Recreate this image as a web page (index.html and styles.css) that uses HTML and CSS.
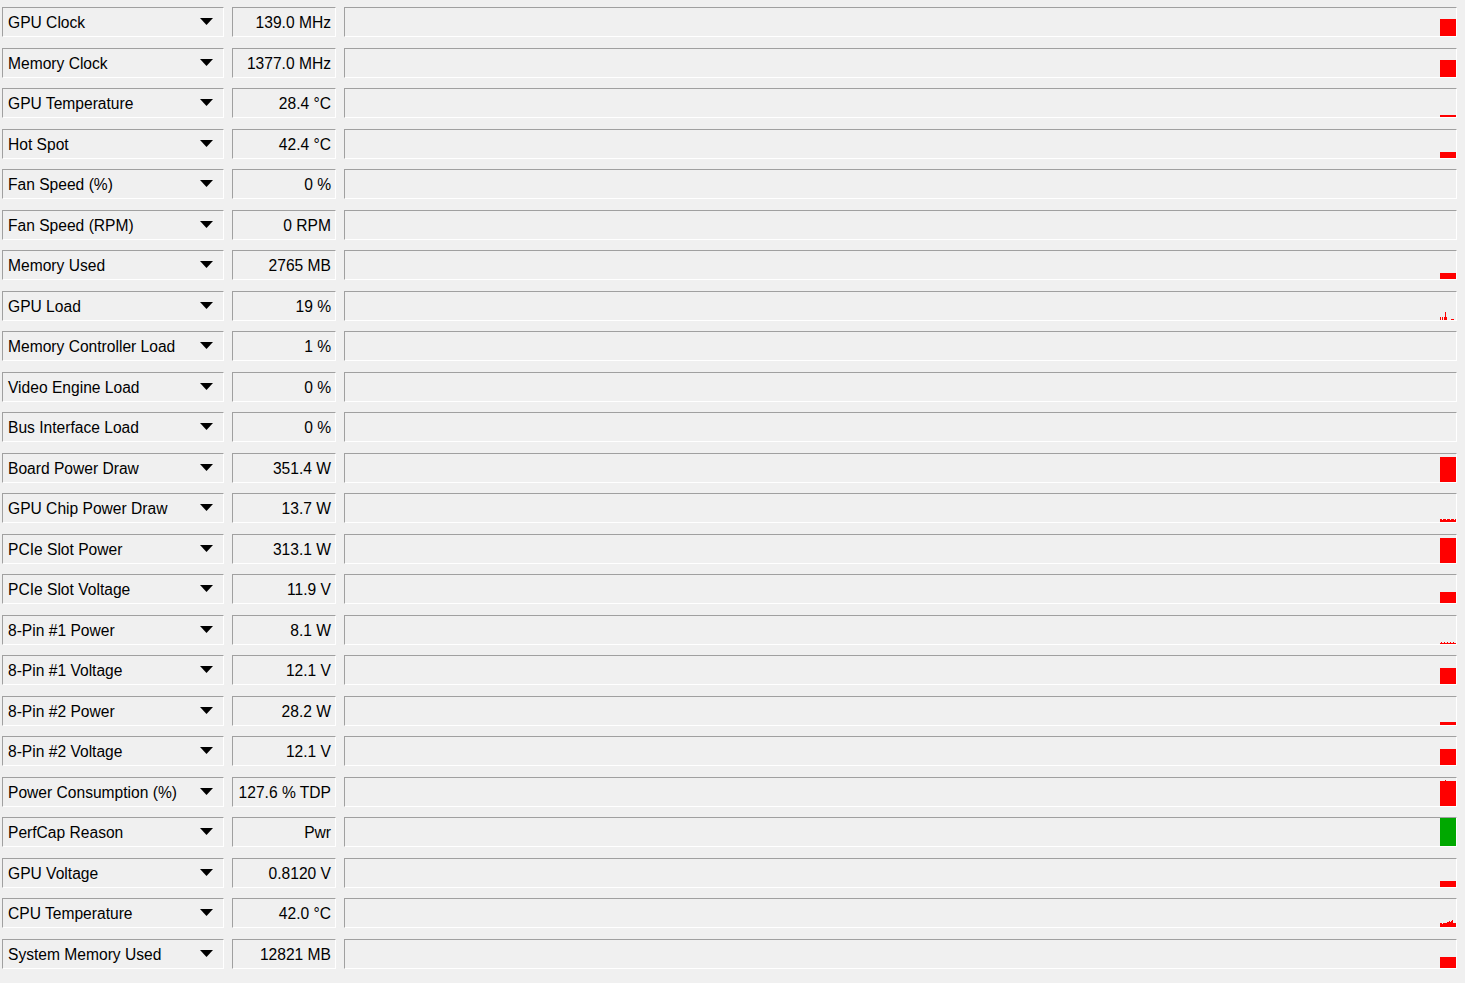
FILE: index.html
```html
<!DOCTYPE html>
<html>
<head>
<meta charset="utf-8">
<title>Sensors</title>
<link rel="stylesheet" href="styles.css">
</head>
<body>
<div class="sensors">
  <div class="row">
    <div class="box name"><span class="label">GPU Clock</span><svg class="arrow" viewBox="0 0 13 7"><polygon points="0,0 13,0 6.5,7"/></svg></div>
    <div class="box value">139.0 MHz</div>
    <div class="box graph"><i class="bar" style="height:17px"></i></div>
  </div>
  <div class="row">
    <div class="box name"><span class="label">Memory Clock</span><svg class="arrow" viewBox="0 0 13 7"><polygon points="0,0 13,0 6.5,7"/></svg></div>
    <div class="box value">1377.0 MHz</div>
    <div class="box graph"><i class="bar" style="height:17px"></i></div>
  </div>
  <div class="row">
    <div class="box name"><span class="label">GPU Temperature</span><svg class="arrow" viewBox="0 0 13 7"><polygon points="0,0 13,0 6.5,7"/></svg></div>
    <div class="box value">28.4 °C</div>
    <div class="box graph"><i class="bar" style="height:2px"></i></div>
  </div>
  <div class="row">
    <div class="box name"><span class="label">Hot Spot</span><svg class="arrow" viewBox="0 0 13 7"><polygon points="0,0 13,0 6.5,7"/></svg></div>
    <div class="box value">42.4 °C</div>
    <div class="box graph"><i class="bar" style="height:6px"></i></div>
  </div>
  <div class="row">
    <div class="box name"><span class="label">Fan Speed (%)</span><svg class="arrow" viewBox="0 0 13 7"><polygon points="0,0 13,0 6.5,7"/></svg></div>
    <div class="box value">0 %</div>
    <div class="box graph"></div>
  </div>
  <div class="row">
    <div class="box name"><span class="label">Fan Speed (RPM)</span><svg class="arrow" viewBox="0 0 13 7"><polygon points="0,0 13,0 6.5,7"/></svg></div>
    <div class="box value">0 RPM</div>
    <div class="box graph"></div>
  </div>
  <div class="row">
    <div class="box name"><span class="label">Memory Used</span><svg class="arrow" viewBox="0 0 13 7"><polygon points="0,0 13,0 6.5,7"/></svg></div>
    <div class="box value">2765 MB</div>
    <div class="box graph"><i class="bar" style="height:6px"></i></div>
  </div>
  <div class="row">
    <div class="box name"><span class="label">GPU Load</span><svg class="arrow" viewBox="0 0 13 7"><polygon points="0,0 13,0 6.5,7"/></svg></div>
    <div class="box value">19 %</div>
    <div class="box graph"><div class="spikes"><i style="height:3px"></i><i style="height:0"></i><i style="height:3px"></i><i style="height:0"></i><i style="height:3px"></i><i style="height:8px"></i><i style="height:3px"></i><i style="height:0"></i><i style="height:0"></i><i style="height:0"></i><i style="height:0"></i><i style="height:1px"></i><i style="height:1px"></i><i style="height:1px"></i><i style="height:0"></i><i style="height:0"></i></div></div>
  </div>
  <div class="row">
    <div class="box name"><span class="label">Memory Controller Load</span><svg class="arrow" viewBox="0 0 13 7"><polygon points="0,0 13,0 6.5,7"/></svg></div>
    <div class="box value">1 %</div>
    <div class="box graph"></div>
  </div>
  <div class="row">
    <div class="box name"><span class="label">Video Engine Load</span><svg class="arrow" viewBox="0 0 13 7"><polygon points="0,0 13,0 6.5,7"/></svg></div>
    <div class="box value">0 %</div>
    <div class="box graph"></div>
  </div>
  <div class="row">
    <div class="box name"><span class="label">Bus Interface Load</span><svg class="arrow" viewBox="0 0 13 7"><polygon points="0,0 13,0 6.5,7"/></svg></div>
    <div class="box value">0 %</div>
    <div class="box graph"></div>
  </div>
  <div class="row">
    <div class="box name"><span class="label">Board Power Draw</span><svg class="arrow" viewBox="0 0 13 7"><polygon points="0,0 13,0 6.5,7"/></svg></div>
    <div class="box value">351.4 W</div>
    <div class="box graph"><i class="bar" style="height:25px"></i></div>
  </div>
  <div class="row">
    <div class="box name"><span class="label">GPU Chip Power Draw</span><svg class="arrow" viewBox="0 0 13 7"><polygon points="0,0 13,0 6.5,7"/></svg></div>
    <div class="box value">13.7 W</div>
    <div class="box graph"><div class="spikes"><i style="height:3px"></i><i style="height:3px"></i><i style="height:2px"></i><i style="height:3px"></i><i style="height:3px"></i><i style="height:3px"></i><i style="height:2px"></i><i style="height:3px"></i><i style="height:3px"></i><i style="height:3px"></i><i style="height:2px"></i><i style="height:3px"></i><i style="height:3px"></i><i style="height:3px"></i><i style="height:2px"></i><i style="height:3px"></i></div></div>
  </div>
  <div class="row">
    <div class="box name"><span class="label">PCIe Slot Power</span><svg class="arrow" viewBox="0 0 13 7"><polygon points="0,0 13,0 6.5,7"/></svg></div>
    <div class="box value">313.1 W</div>
    <div class="box graph"><i class="bar" style="height:25px"></i></div>
  </div>
  <div class="row">
    <div class="box name"><span class="label">PCIe Slot Voltage</span><svg class="arrow" viewBox="0 0 13 7"><polygon points="0,0 13,0 6.5,7"/></svg></div>
    <div class="box value">11.9 V</div>
    <div class="box graph"><i class="bar" style="height:11px"></i></div>
  </div>
  <div class="row">
    <div class="box name"><span class="label">8-Pin #1 Power</span><svg class="arrow" viewBox="0 0 13 7"><polygon points="0,0 13,0 6.5,7"/></svg></div>
    <div class="box value">8.1 W</div>
    <div class="box graph"><div class="spikes"><i style="height:1px"></i><i style="height:2px"></i><i style="height:1px"></i><i style="height:1px"></i><i style="height:2px"></i><i style="height:1px"></i><i style="height:1px"></i><i style="height:2px"></i><i style="height:1px"></i><i style="height:1px"></i><i style="height:2px"></i><i style="height:1px"></i><i style="height:1px"></i><i style="height:2px"></i><i style="height:1px"></i><i style="height:1px"></i></div></div>
  </div>
  <div class="row">
    <div class="box name"><span class="label">8-Pin #1 Voltage</span><svg class="arrow" viewBox="0 0 13 7"><polygon points="0,0 13,0 6.5,7"/></svg></div>
    <div class="box value">12.1 V</div>
    <div class="box graph"><i class="bar" style="height:16px"></i></div>
  </div>
  <div class="row">
    <div class="box name"><span class="label">8-Pin #2 Power</span><svg class="arrow" viewBox="0 0 13 7"><polygon points="0,0 13,0 6.5,7"/></svg></div>
    <div class="box value">28.2 W</div>
    <div class="box graph"><i class="bar" style="height:3px"></i></div>
  </div>
  <div class="row">
    <div class="box name"><span class="label">8-Pin #2 Voltage</span><svg class="arrow" viewBox="0 0 13 7"><polygon points="0,0 13,0 6.5,7"/></svg></div>
    <div class="box value">12.1 V</div>
    <div class="box graph"><i class="bar" style="height:16px"></i></div>
  </div>
  <div class="row">
    <div class="box name"><span class="label">Power Consumption (%)</span><svg class="arrow" viewBox="0 0 13 7"><polygon points="0,0 13,0 6.5,7"/></svg></div>
    <div class="box value">127.6 % TDP</div>
    <div class="box graph"><div class="spikes"><i style="height:25px"></i><i style="height:25px"></i><i style="height:25px"></i><i style="height:25px"></i><i style="height:25px"></i><i style="height:26px"></i><i style="height:25px"></i><i style="height:25px"></i><i style="height:25px"></i><i style="height:25px"></i><i style="height:25px"></i><i style="height:25px"></i><i style="height:25px"></i><i style="height:25px"></i><i style="height:25px"></i><i style="height:25px"></i></div></div>
  </div>
  <div class="row">
    <div class="box name"><span class="label">PerfCap Reason</span><svg class="arrow" viewBox="0 0 13 7"><polygon points="0,0 13,0 6.5,7"/></svg></div>
    <div class="box value">Pwr</div>
    <div class="box graph"><i class="bar green" style="height:28px"></i></div>
  </div>
  <div class="row">
    <div class="box name"><span class="label">GPU Voltage</span><svg class="arrow" viewBox="0 0 13 7"><polygon points="0,0 13,0 6.5,7"/></svg></div>
    <div class="box value">0.8120 V</div>
    <div class="box graph"><i class="bar" style="height:6px"></i></div>
  </div>
  <div class="row">
    <div class="box name"><span class="label">CPU Temperature</span><svg class="arrow" viewBox="0 0 13 7"><polygon points="0,0 13,0 6.5,7"/></svg></div>
    <div class="box value">42.0 °C</div>
    <div class="box graph"><div class="spikes"><i style="height:4px"></i><i style="height:4px"></i><i style="height:3px"></i><i style="height:4px"></i><i style="height:4px"></i><i style="height:4px"></i><i style="height:4px"></i><i style="height:5px"></i><i style="height:5px"></i><i style="height:6px"></i><i style="height:5px"></i><i style="height:6px"></i><i style="height:7px"></i><i style="height:4px"></i><i style="height:4px"></i><i style="height:4px"></i></div></div>
  </div>
  <div class="row">
    <div class="box name"><span class="label">System Memory Used</span><svg class="arrow" viewBox="0 0 13 7"><polygon points="0,0 13,0 6.5,7"/></svg></div>
    <div class="box value">12821 MB</div>
    <div class="box graph"><i class="bar" style="height:11px"></i></div>
  </div>
</div>
</body>
</html>
```

FILE: styles.css
```css
html, body {
  margin: 0;
  padding: 0;
  background: #f0f0f0;
}

body {
  font-family: "Liberation Sans", Arial, sans-serif;
  font-size: 15.6px;
  color: #000;
}

.sensors {
  display: flex;
  flex-direction: column;
  padding: 7px 0 0 2px;
}

.row {
  display: grid;
  grid-template-columns: 222px 104px 1113px;
  column-gap: 8px;
  height: 30px;
}

.row:nth-child(odd) {
  margin-bottom: 11px;
}

.row:nth-child(even) {
  margin-bottom: 10px;
}

.box {
  box-sizing: border-box;
  height: 30px;
  border-top: 1px solid #a0a0a0;
  border-left: 1px solid #a0a0a0;
  border-right: 1px solid #ffffff;
  border-bottom: 1px solid #ffffff;
  background: #f0f0f0;
}

.name {
  display: flex;
  align-items: center;
  justify-content: space-between;
  padding: 0 10px 0 5px;
}

.label {
  white-space: nowrap;
  line-height: 26px;
  padding-top: 2px;
}

.arrow {
  width: 13px;
  height: 7px;
  flex: none;
  margin-top: -1px;
}

.arrow polygon {
  fill: #000;
}

.value {
  text-align: right;
  padding: 2px 4px 0 0;
  line-height: 26px;
  white-space: nowrap;
}

.graph {
  display: flex;
  justify-content: flex-end;
  align-items: flex-end;
}

.bar {
  display: block;
  width: 16px;
  background: #ff0000;
}

.bar.green {
  background: #00a800;
}

.spikes {
  display: flex;
  align-items: flex-end;
  width: 16px;
}

.spikes i {
  display: block;
  width: 1px;
  background: #ff0000;
}
```
